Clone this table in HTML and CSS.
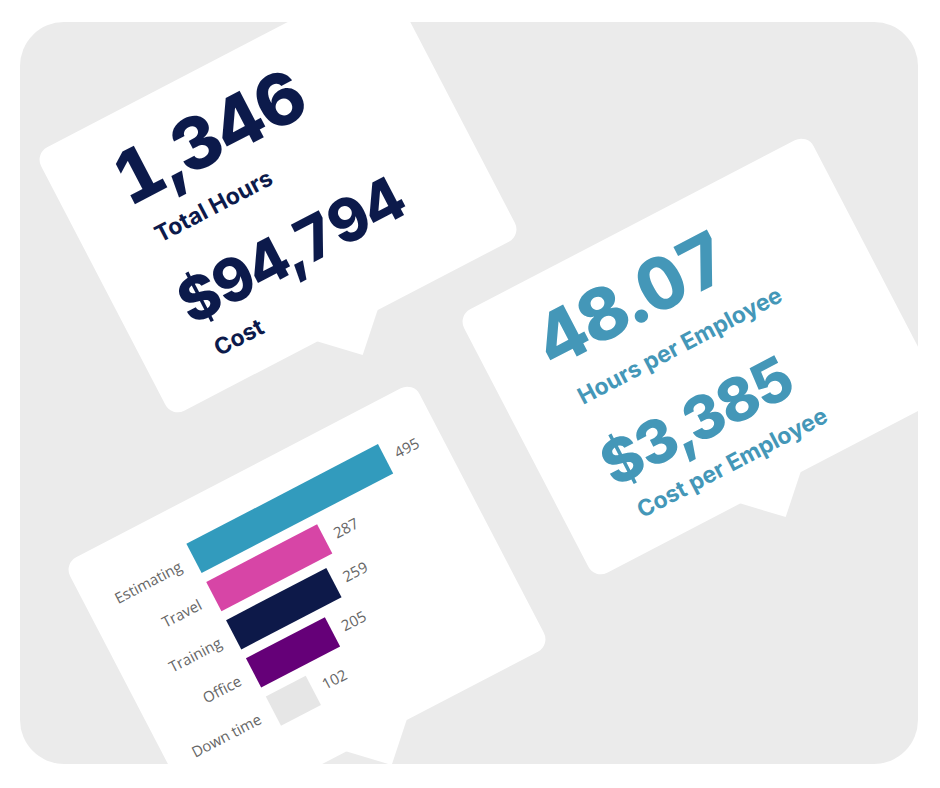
FILE: index.html
```html
<!DOCTYPE html>
<html lang="en">
<head>
<meta charset="utf-8">
<title>Time summary</title>
<link rel="stylesheet" href="styles.css">
</head>
<body>
<main class="panel">
  <section class="card card-hours">
    <div class="kpi">
      <div class="big big-1">1,346</div>
      <div class="label label-1">Total Hours</div>
      <div class="big big-2">$94,794</div>
      <div class="label label-2">Cost</div>
    </div>
  </section>

  <section class="card card-employee">
    <div class="kpi kpi-teal">
      <div class="big big-1">48.07</div>
      <div class="label label-1">Hours per Employee</div>
      <div class="big big-2">$3,385</div>
      <div class="label label-2">Cost per Employee</div>
    </div>
  </section>

  <section class="card card-chart">
    <div class="chart">
      <div class="cat">Estimating</div>
      <div class="bar-cell"><span class="bar bar-teal" style="width:216px"></span><span class="val">495</span></div>
      <div class="cat">Travel</div>
      <div class="bar-cell"><span class="bar bar-pink" style="width:125px"></span><span class="val">287</span></div>
      <div class="cat">Training</div>
      <div class="bar-cell"><span class="bar bar-navy" style="width:113px"></span><span class="val">259</span></div>
      <div class="cat">Office</div>
      <div class="bar-cell"><span class="bar bar-purple" style="width:89px"></span><span class="val">205</span></div>
      <div class="cat">Down time</div>
      <div class="bar-cell"><span class="bar bar-grey" style="width:45px"></span><span class="val">102</span></div>
    </div>
  </section>
</main>
</body>
</html>
```

FILE: styles.css
```css
html, body {
  margin: 0;
  padding: 0;
  background: #ffffff;
}

body {
  font-family: Inter, "Liberation Sans", Arial, sans-serif;
}

.panel {
  position: relative;
  box-sizing: border-box;
  width: 898px;
  height: 742px;
  margin: 22px 0 0 20px;
  background: #ebebeb;
  border-radius: 44px;
  overflow: hidden;
}

.card {
  position: absolute;
  box-sizing: border-box;
  width: 394px;
  height: 297px;
  background: #ffffff;
  border-radius: 14px;
  transform: rotate(-27.5deg);
}

.card::after {
  content: "";
  position: absolute;
  left: 163px;
  top: 296px;
  width: 70px;
  height: 34px;
  background: #ffffff;
  clip-path: polygon(0 0, 100% 0, 50% 100%);
}

.card-hours { left: 61px; top: 24px; }
.card-employee { left: 484px; top: 186px; }
.card-chart { left: 90px; top: 434px; }

/* KPI cards */
.kpi {
  display: flex;
  flex-direction: column;
  align-items: flex-start;
  padding: 29px 0 0 60px;
  color: #0c1a4b;
  font-weight: 700;
  line-height: 1;
  white-space: nowrap;
}

.kpi-teal { color: #4497b8; }

.big {
  font-weight: 800;
  letter-spacing: 0;
  font-variant-numeric: tabular-nums;
}
.big-1 { font-size: 72px; height: 72px; }
.big-2 { font-size: 60px; height: 60px; margin-top: 32px; letter-spacing: -0.6px; }

.label { font-size: 23px; height: 23px; margin-left: 10px; }
.label-1 { margin-top: 17px; }
.label-2 { margin-top: 13px; }

/* Chart card */
.chart {
  display: grid;
  grid-template-columns: 103px 1fr;
  column-gap: 15px;
  row-gap: 10px;
  padding-top: 39px;
  font-family: "Open Sans", "Noto Sans", sans-serif;
  font-size: 15px;
  color: #666666;
}

.cat {
  text-align: right;
  line-height: 33px;
  white-space: nowrap;
}

.bar-cell {
  display: flex;
  align-items: center;
  height: 33px;
}

.bar {
  display: block;
  height: 33px;
  flex: none;
}

.val {
  margin-left: 11px;
  line-height: 33px;
}

.bar-teal { background: #329bbd; }
.bar-pink { background: #d745a6; }
.bar-navy { background: #0d1949; }
.bar-purple { background: #650078; }
.bar-grey { background: #e6e6e6; }
```
